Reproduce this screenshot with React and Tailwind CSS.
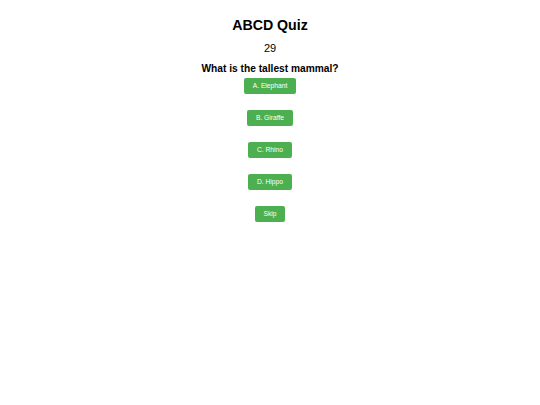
export default function App() {
  const opts = ["A. Elephant", "B. Giraffe", "C. Rhino", "D. Hippo"];
  return (
    <div className="w-[540px] h-[405px] bg-white flex flex-col items-center text-black" style={{ fontFamily: '"Liberation Sans", Arial, sans-serif' }}>
      <h1 className="mt-[16px] text-[14.2px] leading-[18px] font-bold">ABCD Quiz</h1>
      <div className="mt-[7px] text-[11px] leading-[14px]">29</div>
      <h2 className="mt-[7px] text-[10.2px] leading-[14px] font-bold">What is the tallest mammal?</h2>
      <div className="mt-[2px] flex flex-col items-center gap-[16px]">
        {opts.map((o) => (
          <button key={o} className="bg-[#4caf50] text-white text-[6.7px] leading-[8px] py-[4px] px-[9px] rounded-[2px]">
            {o}
          </button>
        ))}
        <button className="bg-[#4caf50] text-white text-[6.7px] leading-[8px] py-[4px] px-[8.5px] rounded-[2px]">Skip</button>
      </div>
    </div>
  );
}
